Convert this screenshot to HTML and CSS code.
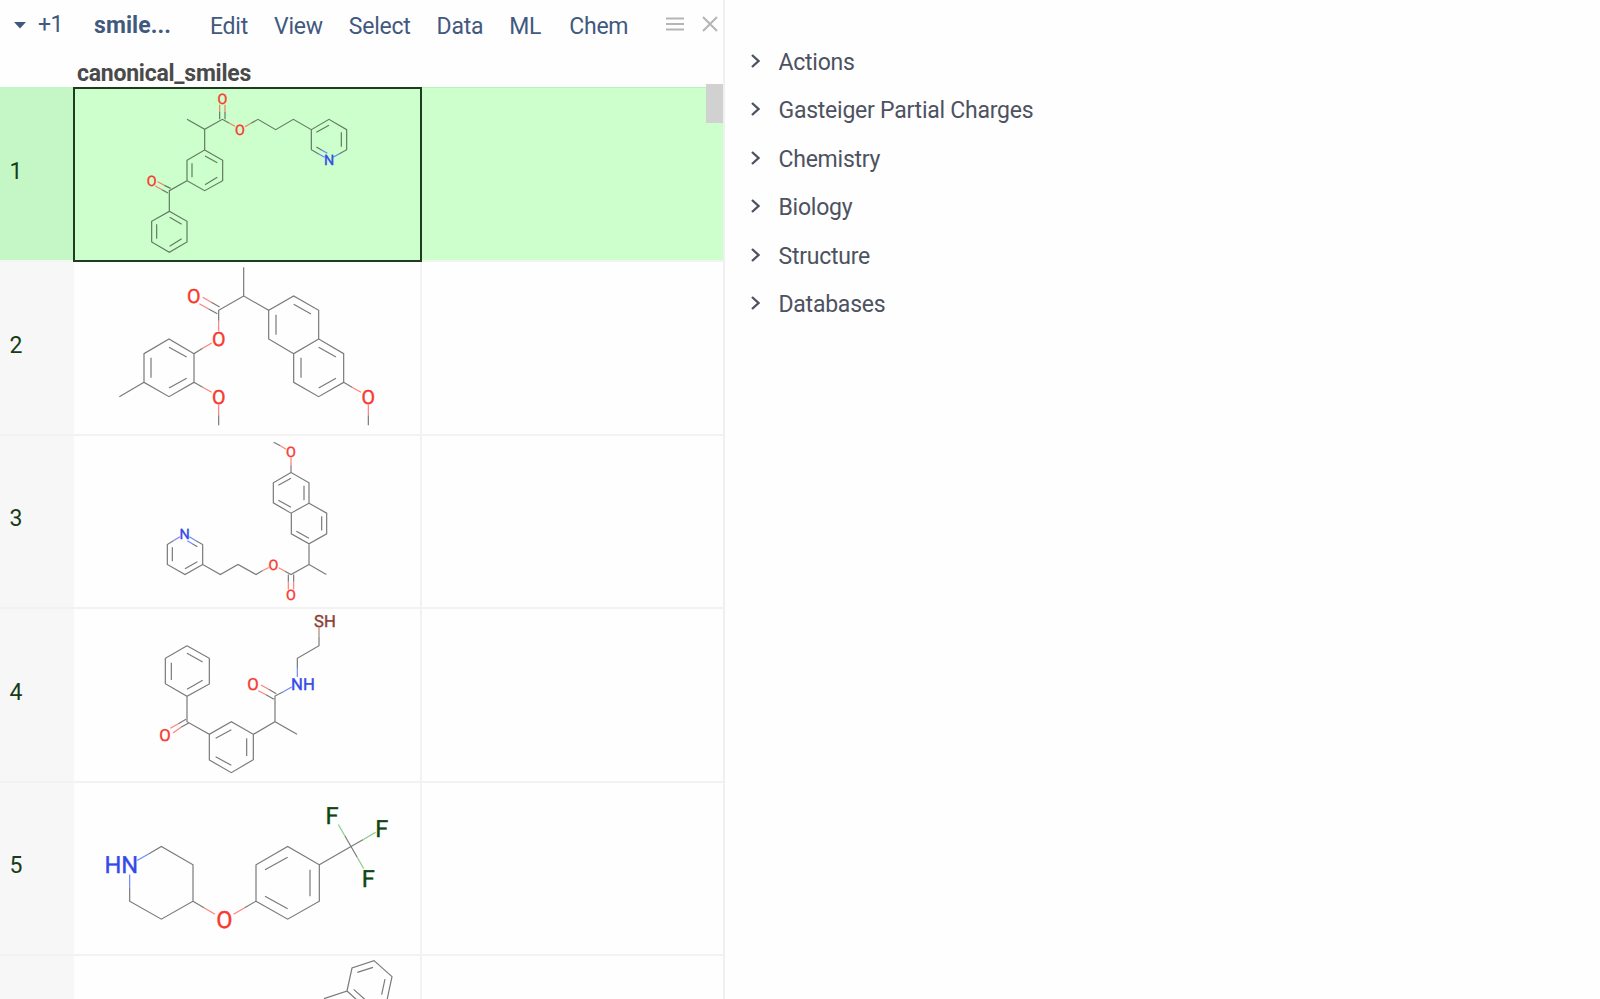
FILE: index.html
```html
<!DOCTYPE html>
<html lang="en">
<head>
<meta charset="utf-8">
<title>smiles</title>
<link rel="stylesheet" href="styles.css">
</head>
<body>
<main class="app">
  <section class="table-view">
    <header class="toolbar">
      <svg class="caret" viewBox="0 0 12 7"><path d="M0 0H12L6 6.5Z"/></svg>
      <span class="count">+1</span>
      <strong class="title">smile...</strong>
      <nav class="menu"><span>Edit</span><span>View</span><span>Select</span><span>Data</span><span>ML</span><span class="last">Chem</span></nav>
      <svg class="burger" viewBox="0 0 18 14"><path d="M0 1.5H18M0 7H18M0 12.5H18"/></svg>
      <svg class="close" viewBox="0 0 16 16"><path d="M1 1L15 15M15 1L1 15"/></svg>
    </header>
    <div class="column-header">canonical_smiles</div>
    <div class="grid">
      <div class="scroll-thumb"></div>
      <div class="row current">
        <div class="row-number">1</div>
        <div class="cell">
          <svg class="mol" viewBox="9 21 1041 519">
            <path class="c" d="M351 118L404 148L457 118L477 129M404 148V210L351 241V302L404 332L458 302V241L404 210M366 250V292M405 228L442 248M442 292L405 314M351 302L298 332V394L245 424V486L298 517L351 486V424L298 394M260 433V476M299 412L335 433M335 476L299 499M302 325L283 316M294 339L276 329M449 118V96M465 118V96M543 130L564 118L617 149L670 118L724 149L777 118L830 149V209L807 222M724 149V209L746 222M739 157L777 136M814 157V200M739 201L756 211"/>
            <path class="o" d="M449 97V74M465 97V74M477 129L495 139M525 140L543 130M283 316L263 305M276 329L256 318"/>
            <path class="n" d="M746 222L764 232M756 211L772 220M807 222L789 232"/>
            <g class="small"><text class="ot" x="457" y="72">O</text><text class="ot" x="510" y="164">O</text><text class="ot" x="245" y="318">O</text><text class="nt" x="777" y="256">N</text></g>
          </svg>
        </div>
        <div class="blank"></div>
      </div>
      <div class="row">
        <div class="row-number">2</div>
        <div class="cell">
          <svg class="mol" viewBox="12 21 1038 514.5">
            <path class="c" d="M521 37V123L596 166L671 123L746 166V252L821 296V382L746 425L671 382V296L746 252M596 166V252L671 296M618 179V239M671 148L723 177M746 277L798 306M798 370L746 399M693 308V368M521 123L446 166V197M449 156L424 142M442 176L416 162M398 280L372 296V382L297 425L222 382V296L297 252L372 296M222 382L148 425M243 308V368M297 277L350 306M350 370L297 399M372 382L398 397M446 481V511M821 382L846 397M895 481V511"/>
            <path class="o" d="M424 142L398 127M416 162L388 146M446 197V229M425 264L398 280M398 397L425 412M446 450V481M846 397L873 412M895 450V481"/>
            <g class="medium"><text class="ot" x="371" y="143.5">O</text><text class="ot" x="446" y="272.5">O</text><text class="ot" x="446" y="446.5">O</text><text class="ot" x="895" y="446.5">O</text></g>
          </svg>
        </div>
        <div class="blank"></div>
      </div>
      <div class="row">
        <div class="row-number">3</div>
        <div class="cell">
          <svg class="mol" viewBox="12 16.5 1038 514.5">
            <path class="c" d="M611 35L631 46M663 104V126L717 157V218L663 248L610 217V157L663 126M625 164L663 143M702 166V209M625 209L663 230M717 218L770 248V310L717 340L664 310V248M755 257V300M679 302L717 323M717 340V402L769 432M717 402L663 432L645 422M655 432V454M671 432V454M578 420L558 432L504 402L451 432L398 402V342L378 331M398 402L345 432L292 402V342L310 331M307 350V392M345 415L382 394M382 349L367 340"/>
            <path class="o" d="M631 46L648 56M663 82V104M645 422L626 412M597 411L578 420M655 454V477M671 454V477"/>
            <path class="n" d="M378 331L358 319M367 340L352 331M310 331L330 319"/>
            <g class="small"><text class="ot" x="663" y="80">O</text><text class="ot" x="610" y="417">O</text><text class="ot" x="663" y="509">O</text><text class="nt" x="344" y="325">N</text></g>
          </svg>
        </div>
        <div class="blank"></div>
      </div>
      <div class="row">
        <div class="row-number">4</div>
        <div class="cell">
          <svg class="mol" viewBox="12 12 1038 514.5">
            <path class="c" d="M351 122L418 160V237L351 274L286 236V160L351 122M304 173V225M351 145L398 171M398 226L351 253M351 274V350L418 388L484 350L550 388V464L484 503L418 465V388M437 400L484 374M530 400V453M437 455L484 481M348 343L325 356M356 354L333 367M550 388L615 350L681 388M615 350V273L640 260M619 266L596 253M612 283L588 269M682 189V160L747 122V95"/>
            <path class="o" d="M325 356L301 370M333 367L309 384M596 253L573 240M588 269L565 257"/>
            <path class="n" d="M640 260L665 246M682 216V189"/><path class="s" d="M747 95V68"/>
            <g class="four"><text class="ot" x="549" y="255">O</text><text class="ot" x="285" y="407">O</text><text class="nt" x="699" y="255">NH</text><text class="st" x="765" y="65">SH</text></g>
          </svg>
        </div>
        <div class="blank"></div>
      </div>
      <div class="row">
        <div class="row-number">5</div>
        <div class="cell">
          <svg class="mol" viewBox="12 7.5 1038 514.5">
            <path class="c" d="M237 220L274 198L369 253V362L274 416L179 362V322M369 362L402 382M524 382L558 362V253L653 198L748 253V362L653 416L558 362M585 268L653 230M720 268V347M585 347L653 385M748 253L843 198L880 177M843 198L824 165M843 198L862 231"/>
            <path class="o" d="M402 382L435 401M491 401L524 382"/>
            <path class="n" d="M237 220L201 240M179 322V282"/>
            <path class="f" d="M824 165L805 132M880 177L917 155M862 231L881 264"/>
            <g class="large"><text class="nt" x="154" y="278">HN</text><text class="ot" x="463" y="442">O</text><text class="ft" x="786" y="129">F</text><text class="ft" x="935" y="168">F</text><text class="ft" x="895" y="318">F</text></g>
          </svg>
        </div>
        <div class="blank"></div>
      </div>
      <div class="row">
        <div class="row-number"></div>
        <div class="cell">
          <svg class="mol" viewBox="12 528 1038 514.5">
            <path class="c" d="M762 656L831 633L846 564L912 542L966 590L951 660L885 682L831 633M862 577L909 562M945 597L935 644M851 628L890 663"/>
          </svg>
        </div>
        <div class="blank"></div>
      </div>
    </div>
  </section>
  <aside class="context-panel">
    <div class="pane"><svg viewBox="0 0 9 14"><path d="M1 1L7.5 7L1 13"/></svg>Actions</div>
    <div class="pane"><svg viewBox="0 0 9 14"><path d="M1 1L7.5 7L1 13"/></svg>Gasteiger Partial Charges</div>
    <div class="pane"><svg viewBox="0 0 9 14"><path d="M1 1L7.5 7L1 13"/></svg>Chemistry</div>
    <div class="pane"><svg viewBox="0 0 9 14"><path d="M1 1L7.5 7L1 13"/></svg>Biology</div>
    <div class="pane"><svg viewBox="0 0 9 14"><path d="M1 1L7.5 7L1 13"/></svg>Structure</div>
    <div class="pane"><svg viewBox="0 0 9 14"><path d="M1 1L7.5 7L1 13"/></svg>Databases</div>
  </aside>
</main>
</body>
</html>
```
FILE: styles.css
```css
* { box-sizing: border-box; }
body { margin: 0; background: #fefefe; font-family: Roboto, sans-serif; font-size: 23px; letter-spacing: -0.24px; color: #4d5261; }
.app { display: flex; height: 999px; overflow: hidden; }
.table-view { width: 725px; flex: none; display: flex; flex-direction: column; border-right: 2px solid #f0f0f2; }
.toolbar { display: flex; align-items: center; height: 52px; flex: none; padding-left: 14px; color: #42597f; white-space: nowrap; }
.caret { width: 12px; height: 7px; margin-bottom: 2px; fill: #42597f; }
.count { width: 56px; margin-left: 12px; line-height: 49px; height: 52px; letter-spacing: -0.5px; }
.title { width: 116px; line-height: 51px; height: 52px; letter-spacing: 0.1px; }
.menu { display: flex; gap: 26px; }
.last { margin-left: 2px; }
.burger { width: 18px; height: 14px; margin: 0 18.5px 4px auto; stroke: #b5b5b5; stroke-width: 2; }
.close { width: 16px; height: 16px; margin: 0 5px 4px 0; stroke: #b5b5b5; stroke-width: 2; }
.column-header { height: 35px; flex: none; padding-left: 77px; line-height: 43px; font-weight: 700; color: #4a4a4a; }
.grid { position: relative; flex: none; }
.scroll-thumb { position: absolute; right: 0; top: -3px; width: 17px; height: 39px; background: #d1d1d1; }
.row { display: flex; height: 173.5px; border-bottom: 2px solid #f2f2f2; }
.row-number { width: 74px; flex: none; display: flex; align-items: center; padding: 0 0 5px 9.5px; background: #f7f7f7; color: #173d17; }
.cell { width: 348px; flex: none; border-right: 2px solid #f2f2f2; }
.blank { flex: 1; }
.current { height: 175px; border-bottom-color: #eef6ee; background: #ccffcc; box-shadow: inset 0 1px #bdeebd; }
.current .row-number { background: #c5f6c5; width: 73px; }
.current .cell { width: 349px; height: 175px; outline: 2px solid #203c20; outline-offset: -2px; border-color: transparent; }
.mol { display: block; width: 100%; height: 171.5px; }
.current .mol { height: 173px; }
.mol path { fill: none; stroke-width: 3.6; }
.mol .c { stroke: #00000085; }
.mol .o { stroke: #ff4033a8; }
.mol .n { stroke: #3350ffb0; }
.mol .s { stroke: #b08070; }
.mol .f { stroke: #86cc86; }
.mol text { text-anchor: middle; stroke-width: 1.2; letter-spacing: 0; text-rendering: geometricPrecision; }
.ot { fill: #f8392f; stroke: #f8392f; }
.nt { fill: #3349e8; stroke: #3349e8; }
.st { fill: #8c4035; stroke: #8c4035; }
.ft { fill: #104510; stroke: #104510; }
.small { font-size: 43px; }
.medium { font-size: 59px; }
.four { font-size: 50px; }
.large { font-size: 71px; }
.context-panel { flex: 1; padding: 38.2px 0 0 25.5px; }
.pane { display: flex; align-items: center; gap: 19px; height: 48.45px; color: #4d5261; }
.pane svg { width: 9px; height: 14px; margin-bottom: 3px; fill: none; stroke: #4d5261; stroke-width: 2.3; }
```
